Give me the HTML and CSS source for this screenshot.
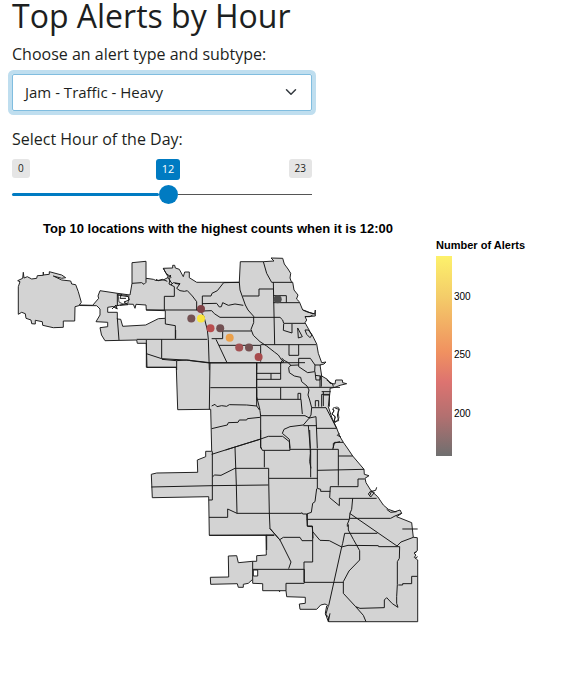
FILE: index.html
```
<!DOCTYPE html>
<html lang="en">
<head>
<meta charset="utf-8">
<title>Top Alerts by Hour</title>
<link rel="stylesheet" href="styles.css">
</head>
<body>
<main class="page">
  <h1 class="title">Top Alerts by Hour</h1>
  <section class="controls">
    <div class="label">Choose an alert type and subtype:</div>
    <div class="select"><span>Jam - Traffic - Heavy</span>
      <svg class="chevron" viewBox="0 0 16 16"><path d="m2 5 6 6 6-6"/></svg>
    </div>
    <div class="label hour-label">Select Hour of the Day:</div>
    <div class="slider">
      <div class="slider-labels"><span class="tag">0</span><span class="tag current">12</span><span class="tag">23</span></div>
      <div class="track"><span class="fill"></span><span class="handle"></span><span class="rest"></span></div>
    </div>
  </section>
  <svg class="chart" viewBox="0 215 564 460" width="564" height="460">
    <defs>
      <linearGradient id="scale" x1="0" y1="0" x2="0" y2="1">
        <stop offset="0" stop-color="#fdf16b"/><stop offset=".2" stop-color="#f4cd69"/>
        <stop offset=".48" stop-color="#f09160"/><stop offset=".63" stop-color="#dd7370"/>
        <stop offset=".8" stop-color="#b37070"/><stop offset="1" stop-color="#6f6f6f"/>
      </linearGradient>
    </defs>
    <text class="chart-title" x="43" y="233" textLength="350">Top 10 locations with the highest counts when it is 12:00</text>
    <g class="area">
      <path fill-rule="evenodd" d="M18.3 314.3V286.7L20 281.7 17.7 280.7 22.7 278.3 23.3 272.3 24 278 27.3 276.7 31.7 279 36.7 278.3 37.3 275.7 43.3 275.3V272V275L49.3 274.3V271.7L61.7 275 65.7 277.7 61.7 278.3 53.3 276 61.7 280 70.7 281 71.7 284 75.7 284.7 78.3 291.7 81.3 302.3 79.3 305 92.7 305.3 98.7 298.3 98 296 100 290.7 117.3 293.3 130 295 132 283.3V262.7L146 261.3V278.3L153.3 279.3 156 280.5 163.3 280 168.3 277.3 163.3 268.3 172.7 268V265.3H174.7L175.3 268 179.3 269.3 183.3 276.7 184.7 272H189.3V277.7L196.7 282.3H239.3L240.3 261.7H263.3L274 261 271 258 282.7 258.3 284.3 264 288 269 290.7 273.3 290 278 291.3 281.7 292.7 282.3 294 290 298 295 296.500 299 299.300 301.7 302.7 310 307.3 312 314.7 314 315.300 310V316L305 316.7 306.7 320 305 322.7 310 331.7 312.7 336 316.7 344 318.3 353.3 321.700 362.7 326 362 324 364 320 365 321.700 376 327.3 379.3 330 383.3 335 384 335.7 380H342.3L342.7 382.7 346.7 383.7 340 385.3 335 387.3 330 388.3V391.700L328.3 406.7 332 418 336.700 428.3 340 436.7 343.300 442.3 348 449 352.7 456 364 469.3 364.3 474.3 369 475.7 365 478.3 366 482.7 371 490.7 377.700 496.700 383.3 505 388.3 509.3 395 511.7 400 510 401.7 513.3 396.7 516.7 411.700 522.7 413.300 537.3 417.3 537.7V550.7L414 553.3 416 555 414.3 557.3 417.7 560V621.7H328.7L328.3 616.7 325.7 615 328.3 605.7 325 604 320.700 605 316.7 609.3H300L299.3 604 305.3 603.3V597.3L286.7 596.7 286 590.7H262.7V583.7L252.7 583.3V579.3L248.3 583.3 243.3 584.3V587.3H238.3L237.3 583.7 210.7 584.3 210.3 577.3 228.700 577 228.3 556 236.700 555.7 238.3 562.700 252.700 561.300H256.700V555.700L266.300 555 266 535 209.3 535.3 208.7 496.7 152.300 497.7 151.3 474.3 156.7 473 197.700 472.3 197.3 460 205.700 456.7V451.3H211.7L210.7 409.3 177.700 409.7 176.3 367.3H147L146.3 343.3H137.3L136.7 340 105 340.7 101.5 335 100 327.7 107.7 326.7V322.3L96 321.7 100 315V309L96.7 305.7 79.3 305.5 75 306.7 74.7 321H63.3V327.3L53.3 327.7 42.7 325.3 42.3 321.7 35.3 320.3V324L31.7 323.7 31 320 26 318.3 25.3 313.7 21.700 312.3Z
      M107.700 307.3 113 306.500 117.3 309 116 306 125 304 133.3 304.3 135 308.3 136 304.3 146 305 146.3 310 165.300 310.7V318.3L158.3 318.7 145.7 325 122.7 326.3 120.7 319.3 117.3 319V312.3H107.7Z
      M253.3 570H257.700V576H253.3Z"/>
    </g>
    <g class="spots">
      <path d="M118 294 129 296 128 303 123 304 119 302Z"/>
      <path d="m333 408 4-1 2 1-1 4 1 6-3 4-2 1 1-6-3-3 2-3Z"/>
    </g>
    <!-- Community boundaries; each group uses a local grid of 3 units per pixel -->
    <g class="lines" transform="translate(100 250) scale(.33333)">
      <path d="M52 130V168M52 135 85 140 88 150 72 156 84 164 60 166M65 132 60 145 78 145M36 177 48 165V175M52 205 57 270M96 100 125 98 132 103 138 97V85M193 180V139H223V110L207 102 210 90 203 84M138 180H302M196 205V222L226 227V267M110 268H322M139 270V352H230M185 268V326M139 311 185 326 270 331M205 82 212 75 208 90 216 100 213 105 220 98 240 101 230 115 240 122 253 124 262 122 277 138 290 155V180H302M168 88 175 92 187 88 202 94M302 180 306 190 312 200 322 240 325 268 328 360M230 332V360M190 55 198 70 214 82M225 100 240 103"/>
    </g>
    <g class="lines" transform="translate(190 250) scale(.33333)">
      <path d="M37 180V138L63 138 66 130 82 122 101 98 148 97 150 120 166 165 174 180 191 199V218L183 238 190 256 210 275 230 288 253 306 265 315 275 330 282 335 270 340M37 161 80 160 88 171 94 170 98 158 115 166 135 162 160 166M37 183 65 182 73 191 90 202H270L278 210 281 220H345M65 266H98V243H184M78 268 111 338M87 286H212V335M212 284H378M0 332 58 339 345 338M220 35 230 70 245 97H307M250 97 254 284M158 138H207V117H250M250 158H327M250 137H289V158M281 222 280 241 306 249V222M323 234 337 260 325 264ZM345 240 350 253 360 263 366 255 355 240ZM297 284V316H326V284M200 338V360M340 180 360 188 374 192M345 200H360L368 195"/>
    </g>
    <g class="lines" transform="translate(140 330) scale(.33333)">
      <path d="M66 88 109 92 140 90 210 98 208 238M107 0V25M208 98H350V200L360 240M211 173H350M215 228 225 223 231 230 245 227 260 229 268 224 320 225 350 228M215 296 240 290 262 285 265 278 294 277 298 270 320 270 322 266 360 262M257 360 282 352 360 328M350 178V210"/>
    </g>
    <g class="lines" transform="translate(240 340) scale(.33333)">
      <path d="M50 68H122V118H50M50 100H122M93 100V118M50 68V198L60 212 62 228V325M52 142H300M52 178H183L187 222M122 142V178M174 178V160H182V178M62 227H195L208 234 228 230M125 55 130 58 122 68M130 60 145 68 152 76 146 83 148 98 163 108 182 112 185 125 201 138 207 150 204 165 209 180 215 203 213 225 207 235 190 255 150 260 132 268 127 280 148 298 150 325M150 76 176 75M176 55H211L225 75 224 95 203 98 176 80ZM225 75H242M225 95 228 120 240 120 242 108 225 106M240 108V142M244 106V140M226 200V182H236V200M245 200V163H268V200M245 155H272M215 203H258L290 265M190 257H230M228 230 232 325M205 257 211 325M230 265H290M280 325V310L300 305M298 280 292 286 303 291"/>
      <path d="M260 120 278 132 280 140M250 155V198M252 165H268M277 208 282 212 276 222 286 230 282 245 296 242 292 225 298 208 286 205"/>
    </g>
    <g class="lines" transform="translate(140 430) scale(.33333)">
      <path d="M215 73 285 51 362 27 385 19 428 19 448 35 450 61H367L362 50V0M285 51 289 166 291 250M373 61V112M217 64V210H206M218 140 224 135 243 136 285 115 386 115V145H533M386 145 388 250 390 295 417 327M34 171 217 167 385 165M207 262H263V237L291 250H485M378 316H403M208 316H380V360"/>
    </g>
    <g class="lines" transform="translate(260 430) scale(.33333)">
      <path d="M90 58H235V167M152 58V142M172 58V175M149 0 151 70 149 95 153 115M172 121 312 118M235 78H278M250 37H224L218 58M172 175 182 178V184H211M211 170H294V147H314M211 170 209 203 238 227V205H350M170 176 165 215 158 220 154 247 140 252 142 289 157 290 159 325M140 268H268M270 265H392L405 258 425 250M278 205 275 238 270 250 268 268 262 283V290M140 252 128 252 125 247M333 182 325 192 332 201 343 188 335 184 347 181 350 172M335 182 330 196M380 238 392 247 410 245"/>
    </g>
    <g class="lines" transform="translate(200 520) scale(.33333)">
      <path d="M198 45H222M209 25 240 60 273 126 266 146M158 148H313V188M158 124V178M258 190V212M258 190H313M238 60 250 52H300L306 62H338M237 212 240 216M380 258 376 280 385 305 390 280"/>
    </g>
    <g class="lines" transform="translate(300 510) scale(.33333)">
      <path d="M22 12V48H37L38 65M149 10 291 108 303 96 340 82M145 43 145 60 160 88 179 122V150L147 183 130 215V250L167 290 190 316 198 335M38 65 60 91 88 92 125 111 128 100 134 70H232M125 111 144 106 235 107 236 110H299L298 145 292 155V224L290 260 290 280 294 292 277 281 260 263 253 270V293L180 295 167 290M125 111 102 215 86 287M12 217H130M38 65V156H12V217M307 57H353M295 225H308V221H335V199H352M342 130 350 125M345 145 353 140"/>
    </g>
    <g class="points">
      <circle cx="201" cy="309" r="4" fill="#804146"/><circle cx="191.300" cy="318.600" r="4" fill="#755354"/>
      <circle cx="201" cy="318.600" r="4" fill="#fae53c"/><circle cx="210.500" cy="328.300" r="4" fill="#b94e4f"/>
      <circle cx="220.200" cy="328.300" r="4" fill="#715052"/><circle cx="229.700" cy="337.800" r="4" fill="#eba04a"/>
      <circle cx="239.200" cy="347.600" r="4" fill="#a35254"/><circle cx="249" cy="347.600" r="4" fill="#755152"/>
      <circle cx="258.600" cy="357.100" r="4" fill="#a74b4d"/><circle cx="277.700" cy="299.300" r="4" fill="#4d4d4d"/>
    </g>
    <text class="legend-title" x="436" y="249" textLength="89">Number of Alerts</text>
    <rect x="436" y="256" width="16" height="200" fill="url(#scale)"/>
    <g class="ticks"><text x="454" y="300">300</text><text x="454" y="358">250</text><text x="454" y="417">200</text></g>
  </svg>
</main>
</body>
</html>
```
FILE: styles.css
```
* { box-sizing: border-box; }
body { margin: 0; background: #fff; color: #1d1f21; font: 16px/24px "Open Sans", sans-serif; }
.page { display: flex; flex-direction: column; height: 675px; }
.title { margin: 0 0 0 12px; height: 42px; font-size: 32px; line-height: 31px; font-weight: 400; white-space: nowrap; }
.controls { width: 300px; margin-left: 12px; height: 173px; white-space: nowrap; }
.label { height: 24px; }
.select { display: flex; align-items: center; justify-content: space-between; height: 37px; margin-top: 8px; padding: 0 14px 1px 12px; border: 1px solid #80bddf; border-radius: 2px; box-shadow: 0 0 0 4px #bfdeef; font-size: 15px; }
.chevron { width: 12px; height: 12px; fill: none; stroke: #343a40; stroke-width: 2; stroke-linecap: round; stroke-linejoin: round; }
.hour-label { margin-top: 16px; }
.slider { margin-top: 8px; }
.slider-labels { display: flex; justify-content: space-between; align-items: flex-start; height: 26px; }
.tag { padding: 0 6px; height: 19px; border-radius: 3px; background: #e5e5e5; font-size: 10px; line-height: 19px; }
.current { width: 24px; height: 21px; margin-left: 51px; margin-right: 34px; background: #007bc2; color: #fff; font-size: 11px; line-height: 20px; }
.track { display: flex; align-items: center; height: 19px; }
.fill { width: 147px; height: 3px; background: #007bc2; border-radius: 2px; }
.handle { width: 19px; height: 19px; border-radius: 50%; background: #007bc2; }
.rest { flex: 1; height: 1px; background: #555; }
.chart { display: block; flex: none; font-family: "Liberation Sans", sans-serif; }
.chart-title { font-size: 13px; font-weight: bold; fill: #000; }
.legend-title { font-size: 11px; font-weight: bold; }
.ticks { font-size: 10px; fill: #000; }
.area { fill: #d3d3d3; stroke: #222; stroke-width: 1; stroke-linejoin: round; }
.spots { fill: #fff; stroke: #222; stroke-width: .8; }
.lines { fill: none; stroke: #181818; stroke-width: 3; stroke-linejoin: round; }
```
